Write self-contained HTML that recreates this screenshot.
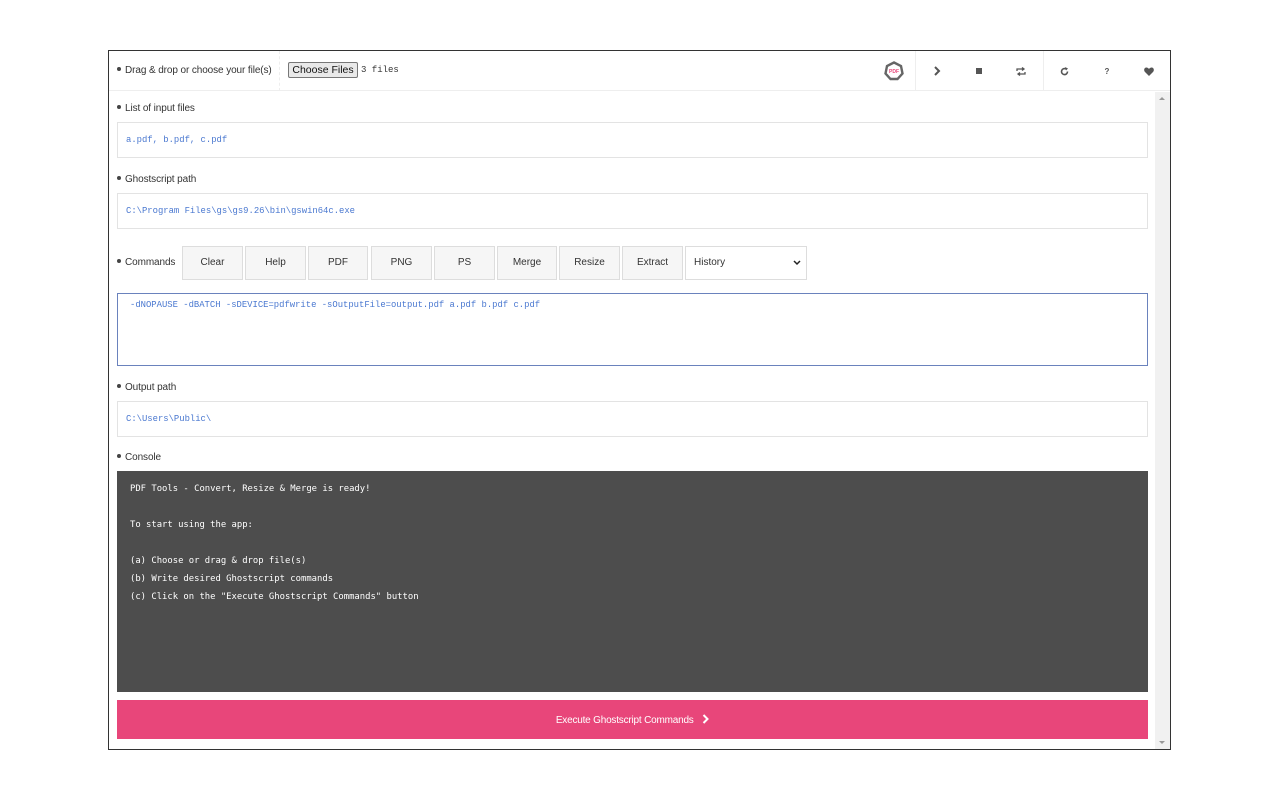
<!DOCTYPE html>
<html><head><style>
*{box-sizing:border-box;margin:0;padding:0}
body{width:1280px;height:800px;background:#fff;font-family:"Liberation Sans",Arial,sans-serif;font-size:11px;color:#333;position:relative;overflow:hidden}
.frame{position:absolute;left:108px;top:50px;width:1063px;height:700px;border:1px solid #333;overflow:hidden}
.abs{position:absolute}
.lbl{position:absolute;left:8px;font-size:10px;color:#333;letter-spacing:-0.1px}
.lbl:before{content:"";display:inline-block;width:4px;height:4px;border-radius:50%;background:#444;margin-right:4px;vertical-align:middle;position:relative;top:-1px}
.box{position:absolute;left:8px;width:1031px;height:36px;border:1px solid #e3e3e3;font-family:"Liberation Mono",monospace;font-size:8.9px;color:#4a78d0;padding:12px 8px}
.btn{position:absolute;top:195px;height:34px;border:1px solid #ddd;background:#f6f6f6;font-size:10px;color:#333;text-align:center;line-height:32px}
.ic{position:absolute;top:0;width:42px;height:40px;display:flex;align-items:center;justify-content:center;color:#666}
</style></head><body>
<div class="frame">
  <div class="abs" style="left:0;top:0;width:1061px;height:40px;border-bottom:1px solid #eee"></div>
  <div class="lbl" style="top:14px">Drag &amp; drop or choose your file(s)</div>
  <div class="abs" style="left:170px;top:0;height:40px;border-left:1px dashed #eee"></div>
  <div class="abs" style="left:179px;top:11px;width:70px;height:16px;border:1px solid #777;border-radius:2px;background:#e9e9e9;font-size:10.5px;text-align:center;line-height:14px;color:#111">Choose Files</div>
  <div class="abs" style="left:252px;top:14px;font-family:'Liberation Mono',monospace;font-size:9px;color:#333">3 files</div>
  <div class="ic" style="left:764px"><svg width="20" height="20" viewBox="0 0 20 20"><polygon points="10,1.5 17,5 18.5,12.5 13.5,18 6.5,18 1.5,12.5 3,5" fill="none" stroke="#666" stroke-width="2.4"/><text x="10" y="12" font-size="5" font-weight="bold" fill="#e8467a" text-anchor="middle" font-family="Liberation Sans">PDF</text></svg></div>
  <div class="abs" style="left:806px;top:0;height:40px;border-left:1px solid #eee"></div>
  <div class="ic" style="left:807px"><svg width="8" height="10" viewBox="0 0 8 10"><path d="M2 1l4 4-4 4" fill="none" stroke="#555" stroke-width="2"/></svg></div>
  <div class="ic" style="left:849px"><div style="width:6px;height:6px;background:#555"></div></div>
  <div class="ic" style="left:891px"><svg width="10" height="9" viewBox="0 0 10 9"><path d="M1 4V2h7M6 0.5l2 1.5-2 1.5M9 5v2H2M4 5.5L2 7l2 1.5" fill="none" stroke="#555" stroke-width="1.3"/></svg></div>
  <div class="abs" style="left:934px;top:0;height:40px;border-left:1px solid #eee"></div>
  <div class="ic" style="left:934px"><svg width="9" height="9" viewBox="0 0 9 9"><path d="M7.5 4.5A3 3 0 1 1 6 2" fill="none" stroke="#555" stroke-width="1.6"/><path d="M5 0l3 1.5-2 2z" fill="#555"/></svg></div>
  <div class="ic" style="left:977px;font-size:8px;font-weight:bold;color:#555">?</div>
  <div class="ic" style="left:1019px"><svg width="10" height="9" viewBox="0 0 10 9"><path d="M5 9L1 5C-0.5 3.5 0 0.5 2.5 0.5 4 0.5 5 2 5 2S6 0.5 7.5 0.5C10 0.5 10.5 3.5 9 5z" fill="#555"/></svg></div>
  <div class="abs" style="left:1046px;top:41px;width:15px;height:657px;background:#f1f1f1"></div>
  <div class="abs" style="left:1050px;top:46px;border:3px solid transparent;border-bottom:3px solid #999;border-top:0"></div>
  <div class="abs" style="left:1050px;top:690px;border:3px solid transparent;border-top:3px solid #999;border-bottom:0"></div>

  <div class="lbl" style="top:52px">List of input files</div>
  <div class="box" style="top:71px">a.pdf, b.pdf, c.pdf</div>
  <div class="lbl" style="top:123px">Ghostscript path</div>
  <div class="box" style="top:142px">C:\Program Files\gs\gs9.26\bin\gswin64c.exe</div>
  <div class="lbl" style="top:206px">Commands</div>
  <div class="btn" style="left:73px;width:61px">Clear</div>
  <div class="btn" style="left:136px;width:61px">Help</div>
  <div class="btn" style="left:199px;width:60px">PDF</div>
  <div class="btn" style="left:262px;width:61px">PNG</div>
  <div class="btn" style="left:325px;width:61px">PS</div>
  <div class="btn" style="left:388px;width:60px">Merge</div>
  <div class="btn" style="left:450px;width:61px">Resize</div>
  <div class="btn" style="left:513px;width:61px">Extract</div>
  <div class="btn" style="left:576px;width:122px;background:#fff;text-align:left;padding-left:8px">History<svg style="position:absolute;right:5px;top:13px" width="8" height="6" viewBox="0 0 8 6"><path d="M1 1l3 3 3-3" fill="none" stroke="#222" stroke-width="1.5"/></svg></div>
  <div class="box" style="top:242px;height:73px;border-color:#6a82bd;padding:6px 12px">-dNOPAUSE -dBATCH -sDEVICE=pdfwrite -sOutputFile=output.pdf a.pdf b.pdf c.pdf</div>
  <div class="lbl" style="top:331px">Output path</div>
  <div class="box" style="top:350px">C:\Users\Public\</div>
  <div class="lbl" style="top:401px">Console</div>
  <div class="abs" style="left:8px;top:420px;width:1031px;height:221px;background:#4d4d4d;color:#fff;font-family:'DejaVu Sans Mono','Liberation Mono',monospace;font-size:8.9px;padding:9px 13px;line-height:18px;white-space:pre">PDF Tools - Convert, Resize &amp; Merge is ready!

To start using the app:

(a) Choose or drag &amp; drop file(s)
(b) Write desired Ghostscript commands
(c) Click on the "Execute Ghostscript Commands" button</div>
  <div class="abs" style="left:8px;top:649px;width:1031px;height:39px;background:#e8467a;color:#fff;font-size:10px;letter-spacing:-0.2px;text-align:center;line-height:41px">Execute Ghostscript Commands <svg style="margin-left:6px;vertical-align:-1px" width="7" height="10" viewBox="0 0 7 10"><path d="M1.5 1l4 4-4 4" fill="none" stroke="#fff" stroke-width="2"/></svg></div>
</div>
</body></html>
